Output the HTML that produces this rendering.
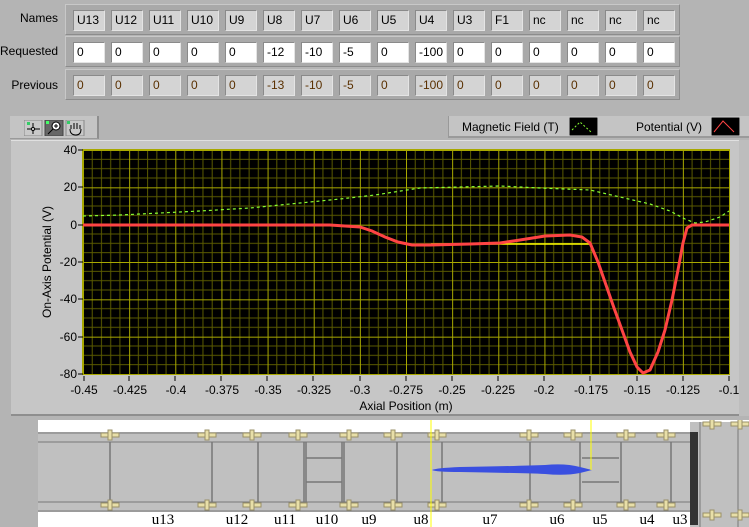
<!DOCTYPE html>
<html><head><meta charset="utf-8"><style>
*{margin:0;padding:0;box-sizing:border-box}
body{width:749px;height:527px;background:#b4b4b4;position:relative;overflow:hidden;font-family:"Liberation Sans",Tahoma,sans-serif;font-size:12px;color:#000}
.lbl{position:absolute;width:58px;text-align:right;font-size:12px}
.row{position:absolute;left:65px;width:615px;height:31px;background:#a9a9a9;border:1px solid #c8c8c8;border-right-color:#8c8c8c;border-bottom-color:#8c8c8c}
.c{position:absolute;top:5px;width:32px;height:21px;background:#d4d4d4;border:1px solid #8a8a8a;border-right-color:#e4e4e4;border-bottom-color:#e4e4e4;padding:3px 0 0 3px;font-size:12px;line-height:13px}
.w{background:#fff}
.o{color:#5a3000}
</style></head><body>
<div class="lbl" style="top:11px">Names</div>
<div class="lbl" style="top:44px">Requested</div>
<div class="lbl" style="top:78px">Previous</div>

<div class="row" style="top:4px">
<div class="c" style="left:7px">U13</div><div class="c" style="left:45px">U12</div><div class="c" style="left:83px">U11</div><div class="c" style="left:121px">U10</div><div class="c" style="left:159px">U9</div><div class="c" style="left:197px">U8</div><div class="c" style="left:235px">U7</div><div class="c" style="left:273px">U6</div><div class="c" style="left:311px">U5</div><div class="c" style="left:349px">U4</div><div class="c" style="left:387px">U3</div><div class="c" style="left:425px">F1</div><div class="c" style="left:463px">nc</div><div class="c" style="left:501px">nc</div><div class="c" style="left:539px">nc</div><div class="c" style="left:577px">nc</div>
</div>
<div class="row" style="top:36px">
<div class="c w" style="left:7px">0</div><div class="c w" style="left:45px">0</div><div class="c w" style="left:83px">0</div><div class="c w" style="left:121px">0</div><div class="c w" style="left:159px">0</div><div class="c w" style="left:197px">-12</div><div class="c w" style="left:235px">-10</div><div class="c w" style="left:273px">-5</div><div class="c w" style="left:311px">0</div><div class="c w" style="left:349px">-100</div><div class="c w" style="left:387px">0</div><div class="c w" style="left:425px">0</div><div class="c w" style="left:463px">0</div><div class="c w" style="left:501px">0</div><div class="c w" style="left:539px">0</div><div class="c w" style="left:577px">0</div>
</div>
<div class="row" style="top:69px">
<div class="c o" style="left:7px">0</div><div class="c o" style="left:45px">0</div><div class="c o" style="left:83px">0</div><div class="c o" style="left:121px">0</div><div class="c o" style="left:159px">0</div><div class="c o" style="left:197px">-13</div><div class="c o" style="left:235px">-10</div><div class="c o" style="left:273px">-5</div><div class="c o" style="left:311px">0</div><div class="c o" style="left:349px">-100</div><div class="c o" style="left:387px">0</div><div class="c o" style="left:425px">0</div><div class="c o" style="left:463px">0</div><div class="c o" style="left:501px">0</div><div class="c o" style="left:539px">0</div><div class="c o" style="left:577px">0</div>
</div>

<!-- toolbar -->
<div style="position:absolute;left:10px;top:116px;width:89px;height:23px;background:#c4c4c4;border-right:2px solid #8e8e8e;border-bottom:1px solid #9a9a9a"></div>
<svg style="position:absolute;left:24px;top:120px" width="66" height="16">
<rect x="0" y="0" width="18" height="16" fill="#c9c9c9" stroke="#888"/>
<rect x="3" y="2" width="3" height="3" fill="#3c6"/><path d="M9 3V14M3 9H16" stroke="#000"/><circle cx="9" cy="9" r="1.5" fill="#fff" stroke="#000"/>
<rect x="21" y="0" width="18" height="16" fill="#666" stroke="#444"/>
<rect x="22" y="1" width="3" height="3" fill="#4f6"/><circle cx="32" cy="6" r="4" fill="#fff" stroke="#000"/><path d="M30 6h4M32 4v4M29 9l-5 5" stroke="#000"/>
<rect x="42" y="0" width="18" height="16" fill="#c9c9c9" stroke="#888"/>
<rect x="43" y="1" width="3" height="3" fill="#3c6"/><path d="M47 9v-4M50 9v-6M53 9v-6M56 9v-4M46 9q0 6 6 6q5 0 5-6" stroke="#000" fill="none"/>
</svg>

<!-- legend -->
<div style="position:absolute;left:448px;top:116px;width:301px;height:22px;background:#c4c4c4;border-bottom:2px solid #9a9a9a;border-left:1px solid #999"></div>
<div style="position:absolute;left:462px;top:120px;font-size:12px">Magnetic Field (T)</div>
<div style="position:absolute;left:636px;top:120px;font-size:12px">Potential (V)</div>
<svg style="position:absolute;left:569px;top:117px" width="29" height="19"><rect width="29" height="19" fill="#000" stroke="#ddd"/><path d="M3 13L11 5L22 15" stroke="#8f3" stroke-dasharray="2 2" fill="none"/></svg>
<svg style="position:absolute;left:711px;top:117px" width="29" height="19"><rect width="29" height="19" fill="#000" stroke="#ddd"/><path d="M3 15L12 4L23 15" stroke="#f44" fill="none"/></svg>

<!-- graph panel -->
<div style="position:absolute;left:11px;top:140px;width:728px;height:276px;background:#c6c6c6;border-top:1px solid #e0e0e0;border-bottom:2px solid #8e8e8e"></div>
<div style="position:absolute;left:739px;top:140px;width:10px;height:276px;background:#bdbdbd"></div>
<svg style="position:absolute;left:0;top:0" width="749" height="420">
<defs>
<pattern id="g" x="83" y="150" width="46.143" height="37.333" patternUnits="userSpaceOnUse">
<path d="M9.23 0V37.33M18.46 0V37.33M27.69 0V37.33M36.91 0V37.33M0 9.33H46.14M0 18.67H46.14M0 28H46.14" stroke="#5a5a00" stroke-width="1"/>
<path d="M0.5 0V37.33M0 0.5H46.14" stroke="#a8a800" stroke-width="1"/>
</pattern>
</defs>
<rect x="83" y="150" width="646" height="224" fill="#000"/>
<rect x="83" y="150" width="646" height="224" fill="url(#g)"/>
<rect x="82.5" y="149.5" width="647" height="225" fill="none" stroke="#a8a800"/>
<g stroke="#000">
<path d="M78 150h5M78 187h5M78 225h5M78 262h5M78 299h5M78 337h5M78 374h5"/>
<path d="M84 376v5M129 376v5M175 376v5M221 376v5M267 376v5M313 376v5M360 376v5M406 376v5M452 376v5M498 376v5M544 376v5M590 376v5M637 376v5M683 376v5M729 376v5"/>
</g>
<g font-size="12" text-anchor="end" font-family="Liberation Sans,sans-serif">
<text x="77" y="154">40</text><text x="77" y="191">20</text><text x="77" y="229">0</text><text x="77" y="266">-20</text><text x="77" y="303">-40</text><text x="77" y="341">-60</text><text x="77" y="378">-80</text>
</g>
<g font-size="12" text-anchor="middle" font-family="Liberation Sans,sans-serif">
<text x="84" y="394">-0.45</text><text x="130" y="394">-0.425</text><text x="176" y="394">-0.4</text><text x="222" y="394">-0.375</text><text x="268" y="394">-0.35</text><text x="314" y="394">-0.325</text><text x="360" y="394">-0.3</text><text x="406" y="394">-0.275</text><text x="452" y="394">-0.25</text><text x="498" y="394">-0.225</text><text x="544" y="394">-0.2</text><text x="591" y="394">-0.175</text><text x="637" y="394">-0.15</text><text x="683" y="394">-0.125</text><text x="729" y="394">-0.1</text>
<text x="406" y="410">Axial Position (m)</text>
<text transform="translate(51 262) rotate(-90)">On-Axis Potential (V)</text>
</g>
<polyline points="83,216 120,215 160,213 200,211 250,208 300,203 340,199 375,195 420,188 460,187 500,186 540,188 590,190 620,197 650,204 670,211 685,219 695,223 705,222 720,217 729,211" fill="none" stroke="#8f3" stroke-width="1.2" stroke-dasharray="3 3"/>
<path d="M431 244H591" stroke="#ff0" stroke-width="1.5"/>
<polyline points="83,225 330,225 345,226 360,227 372,231 385,237 398,242 412,245 430,245 470,244 500,243 520,240 545,236 570,235 582,237 590,243 598,262 606,285 614,308 622,330 630,352 637,367 643,373 650,370 658,352 665,330 672,300 678,270 683,243 687,228 692,225 729,225" fill="none" stroke="#f44" stroke-width="3"/>
</svg>

<!-- bottom image -->
<svg style="position:absolute;left:0;top:420px" width="749" height="107">
<defs>
<g id="x" fill="#e8dfa8" stroke="#9a9068"><rect x="-9" y="-2" width="18" height="4"/><rect x="-2" y="-5" width="4" height="10"/></g>
</defs>
<rect x="38" y="0" width="711" height="107" fill="#fff"/>
<rect x="38" y="12" width="652" height="80" fill="#c0c0c0"/>
<path d="M38 13H690M38 22H690M38 82H690M38 91H690" stroke="#777"/>
<rect x="690" y="2" width="59" height="105" fill="#c0c0c0"/>
<rect x="690" y="12" width="8" height="93" fill="#333"/>
<path d="M700 2V107M738 2V107" stroke="#777"/>
<g stroke="#777" fill="none" stroke-width="1.5">
<path d="M110 22V82M212 22V82M258 22V82M304 22V82M344 22V82M397 22V82M442 22V82M530 22V82M580 22V82M621 22V82M671 22V82"/>
<path d="M306 22V82M342 22V82M306 38H342M306 62H342M582 38H619M582 62H619"/>
</g>
<use href="#x" x="110" y="15"/><use href="#x" x="110" y="85"/>
<use href="#x" x="207" y="15"/><use href="#x" x="207" y="85"/>
<use href="#x" x="252" y="15"/><use href="#x" x="252" y="85"/>
<use href="#x" x="298" y="15"/><use href="#x" x="298" y="85"/>
<use href="#x" x="349" y="15"/><use href="#x" x="349" y="85"/>
<use href="#x" x="393" y="15"/><use href="#x" x="393" y="85"/>
<use href="#x" x="437" y="15"/><use href="#x" x="437" y="85"/>
<use href="#x" x="529" y="15"/><use href="#x" x="529" y="85"/>
<use href="#x" x="573" y="15"/><use href="#x" x="573" y="85"/>
<use href="#x" x="626" y="15"/><use href="#x" x="626" y="85"/>
<use href="#x" x="666" y="15"/><use href="#x" x="666" y="85"/>
<use href="#x" x="712" y="4"/><use href="#x" x="712" y="95"/>
<use href="#x" x="740" y="4"/><use href="#x" x="740" y="95"/>
<path d="M432 50Q436 48 460 47Q520 46 545 45Q565 43 580 47L592 50L580 53Q565 56 545 54Q520 53 460 52Q436 52 432 50Z" fill="#3a4fe0"/>
<path d="M431 0V107M591 0V50" stroke="#ff0" stroke-width="1"/>
<g font-family="Liberation Serif,serif" font-size="15" text-anchor="middle">
<text x="163" y="104">u13</text><text x="237" y="104">u12</text><text x="285" y="104">u11</text><text x="327" y="104">u10</text><text x="369" y="104">u9</text><text x="421" y="104">u8</text><text x="490" y="104">u7</text><text x="557" y="104">u6</text><text x="600" y="104">u5</text><text x="647" y="104">u4</text><text x="680" y="104">u3</text>
</g>
</svg>
</body></html>
